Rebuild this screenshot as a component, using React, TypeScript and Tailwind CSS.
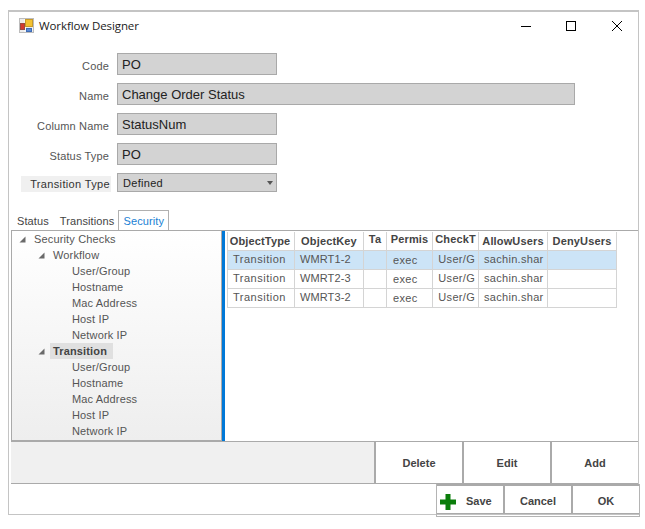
import React from "react";

function Field({ label, value, wide }: { label: string; value: string; wide?: boolean }) {
  return (
    <div className="flex h-[22px] items-center">
      <div className="w-[100px] pr-[8px] pt-[4px] text-right text-[11px] tracking-[0.15px] text-[#555]">{label}</div>
      <div className={`${wide ? "w-[458px]" : "w-[160px]"} flex h-[22px] items-center border border-[#a9a9a9] bg-[#d3d3d3] pl-[4px] pt-px text-[13px] text-[#222]`}>
        {value}
      </div>
    </div>
  );
}

function Arrow() {
  return (
    <svg width="7" height="7" viewBox="0 0 7 7" className="shrink-0">
      <polygon points="6.5,0.5 6.5,6.5 0.5,6.5" fill="#6a6a6a" />
    </svg>
  );
}

function TreeRow({ label, level, arrow, selected }: { label: string; level: "root" | "mid" | "leaf"; arrow?: boolean; selected?: boolean }) {
  const pad = level === "root" ? "pl-[7px]" : level === "mid" ? "pl-[26px]" : "pl-[60px]";
  return (
    <div className={`flex h-[16px] items-center ${pad} text-[11px] tracking-[0.15px] text-[#555]`}>
      {arrow && <Arrow />}
      {selected ? (
        <span className="ml-[5px] flex h-[16px] w-[63px] items-center bg-[#e0e0e0] pl-[3px] font-bold text-[#444]">{label}</span>
      ) : (
        <span className={arrow ? "ml-[8px]" : ""}>{label}</span>
      )}
    </div>
  );
}

const cols = [
  { w: "w-[68px]", h: "ObjectType" },
  { w: "w-[69px]", h: "ObjectKey" },
  { w: "w-[23px]", h: "Ta" },
  { w: "w-[46px]", h: "Permis" },
  { w: "w-[46px]", h: "CheckT" },
  { w: "w-[69px]", h: "AllowUsers" },
  { w: "w-[69px]", h: "DenyUsers" },
];

const rows = [
  ["Transition", "WMRT1-2"],
  ["Transition", "WMRT2-3"],
  ["Transition", "WMRT3-2"],
];

function Grid() {
  return (
    <div className="ml-[2px] w-[390px] pt-px">
      <div className="flex h-[19px] border-b border-[#d4d4d4]">
        {cols.map((c, i) => (
          <div
            key={c.h}
            className={`${c.w} flex shrink-0 justify-center overflow-hidden whitespace-nowrap border-r border-[#d4d4d4] text-[11px] font-bold tracking-[0.15px] text-[#444] ${i >= 2 && i <= 4 ? "items-start leading-[15px]" : "items-center pt-px"} ${i === 0 ? "border-l pr-[2px]" : ""}`}
          >
            {c.h}
          </div>
        ))}
      </div>
      {rows.map((r, i) => (
        <div key={r[1]} className={`flex h-[19px] border-b border-[#d4d4d4] text-[11px] tracking-[0.3px] text-[#555] ${i === 0 ? "bg-[#cce4f7]" : ""}`}>
          <div className="flex w-[68px] shrink-0 items-center border-x border-[#d4d4d4] pb-px pl-[5px] tracking-[0.5px]">{r[0]}</div>
          <div className="flex w-[69px] shrink-0 items-center border-r border-[#d4d4d4] pb-px pl-[5px] tracking-[0.1px]">{r[1]}</div>
          <div className="w-[23px] shrink-0 border-r border-[#d4d4d4]" />
          <div className="flex w-[46px] shrink-0 items-center border-r border-[#d4d4d4] pl-[6px] pt-px">exec</div>
          <div className="flex w-[46px] shrink-0 items-center justify-end overflow-hidden whitespace-nowrap border-r border-[#d4d4d4] pb-[2px] pr-[3px]">User/G</div>
          <div className="flex w-[69px] shrink-0 items-center overflow-hidden whitespace-nowrap border-r border-[#d4d4d4] pb-px pl-[5px]">sachin.shar</div>
          <div className="w-[69px] shrink-0 border-r border-[#d4d4d4]" />
        </div>
      ))}
    </div>
  );
}

export default function App() {
  return (
    <div className="h-[529px] w-[645px] bg-white pl-[8px] pt-[10px] font-['Liberation_Sans',Arial,sans-serif]">
      <div className="flex h-[505px] w-[631px] flex-col border border-t-2 border-[#c4c4c4]">
        {/* Title bar */}
        <div className="flex h-[29px] shrink-0 items-center pb-[2px] pl-[10px]">
          <svg width="15" height="15" viewBox="0 0 15 15">
            <rect x="0.5" y="0.5" width="14" height="14" fill="#ececec" stroke="#bcbcbc" />
            <path d="M1 8h5M8 11h6M6 1v13" stroke="#fff" />
            <rect x="6.5" y="1.5" width="7" height="7" fill="#f3c232" stroke="#c79a2a" />
            <rect x="1.5" y="5.5" width="4" height="6" fill="#d43a30" stroke="#9c4a40" />
            <rect x="7.5" y="10.5" width="5" height="3" fill="#5a8ad8" stroke="#3f6cb4" />
          </svg>
          <span className="ml-[5px] font-['Open_Sans',sans-serif] text-[11.5px] tracking-[-0.1px] text-[#1a1a1a]">Workflow Designer</span>
          <div className="ml-auto flex items-center">
            <svg width="12" height="12" viewBox="0 0 12 12" className="mr-[33px]">
              <line x1="1" y1="6.5" x2="11" y2="6.5" stroke="#000" />
            </svg>
            <svg width="12" height="12" viewBox="0 0 12 12" className="mr-[34px]">
              <rect x="1.5" y="1.5" width="9" height="9" fill="none" stroke="#000" />
            </svg>
            <svg width="12" height="12" viewBox="0 0 12 12" className="mr-[15px]">
              <path d="M1 1 L11 11 M11 1 L1 11" stroke="#000" strokeWidth="1" fill="none" />
            </svg>
          </div>
        </div>

        {/* Form */}
        <div className="flex shrink-0 flex-col gap-[8px] pl-[8px] pt-[12px]">
          <Field label="Code" value="PO" />
          <Field label="Name" value="Change Order Status" wide />
          <Field label="Column Name" value="StatusNum" />
          <Field label="Status Type" value="PO" />
          <div className="flex h-[19px] items-end">
            <div className="ml-[4px] flex h-[16px] w-[90px] items-center justify-end whitespace-nowrap bg-[#f0f0f0] pr-[1px] text-[11px] tracking-[0.35px] text-[#333]">
              Transition Type
            </div>
            <div className="ml-[6px] flex h-[19px] w-[160px] items-center justify-between self-start border border-[#a9a9a9] bg-[#d3d3d3] pl-[5px] pr-[3px] pt-px text-[11px] tracking-[0.3px] text-[#222]">
              Defined
              <svg width="6" height="4" viewBox="0 0 6 4">
                <polygon points="0,0 6,0 3,4" fill="#555" />
              </svg>
            </div>
          </div>
        </div>

        {/* Tabs */}
        <div className="mt-[18px] flex h-[20px] shrink-0 items-end pl-[8px] text-[11px] tracking-[0.1px]">
          <span className="mb-px text-[#444]">Status</span>
          <span className="mb-px ml-[11px] text-[#444]">Transitions</span>
          <span className="ml-[4px] flex h-[20px] w-[51px] items-center justify-center border border-b-0 border-[#b0b0b0] pt-px text-[#1a7fd4]">Security</span>
        </div>

        {/* Panel */}
        <div className="ml-[2px] flex h-[211px] shrink-0 border-t border-[#aaaaaa]">
          <div className="w-[211px] shrink-0 border-x border-b border-[#aaaaaa] bg-gradient-to-b from-white to-[#eeeeee]">
            <TreeRow label="Security Checks" level="root" arrow />
            <TreeRow label="Workflow" level="mid" arrow />
            <TreeRow label="User/Group" level="leaf" />
            <TreeRow label="Hostname" level="leaf" />
            <TreeRow label="Mac Address" level="leaf" />
            <TreeRow label="Host IP" level="leaf" />
            <TreeRow label="Network IP" level="leaf" />
            <TreeRow label="Transition" level="mid" arrow selected />
            <TreeRow label="User/Group" level="leaf" />
            <TreeRow label="Hostname" level="leaf" />
            <TreeRow label="Mac Address" level="leaf" />
            <TreeRow label="Host IP" level="leaf" />
            <TreeRow label="Network IP" level="leaf" />
          </div>
          <div className="w-[3px] shrink-0 bg-[#0078d7]" />
          <Grid />
        </div>

        {/* Action bar */}
        <div className="ml-[2px] flex h-[43px] shrink-0 border-y border-[#aaaaaa] bg-[#f0f0f0]">
          <div className="ml-auto flex">
            {["Delete", "Edit", "Add"].map((b) => (
              <div key={b} className="flex w-[88px] items-center justify-center border-l-2 border-[#aaaaaa] bg-white pt-px text-[11px] font-bold text-[#444]">
                {b}
              </div>
            ))}
          </div>
        </div>

        {/* Footer */}
        <div className="ml-auto mr-[-2px] flex h-[33px] w-[204px] shrink-0 border-x border-b border-[#b4b4b4]">
          <div className="flex h-[30px] w-[68px] items-center border-y border-t-2 border-r-2 border-[#aaaaaa] bg-white pt-[4px] text-[11px] font-bold text-[#444]">
            <svg width="16" height="16" viewBox="0 0 16 16" className="ml-[3px]">
              <path d="M5.500 0h5v5.500H16v5h-5.500V16h-5v-5.500H0v-5h5.500z" fill="#0a7d0a" />
            </svg>
            <span className="ml-[10px]">Save</span>
          </div>
          <div className="flex h-[30px] w-[68px] items-center justify-center border-y border-t-2 border-r-2 border-[#aaaaaa] bg-white pt-[4px] text-[11px] font-bold text-[#444]">Cancel</div>
          <div className="flex h-[30px] flex-1 items-center justify-center border-y border-t-2 border-[#aaaaaa] bg-white pt-[4px] text-[11px] font-bold text-[#444]">OK</div>
        </div>
      </div>
    </div>
  );
}
